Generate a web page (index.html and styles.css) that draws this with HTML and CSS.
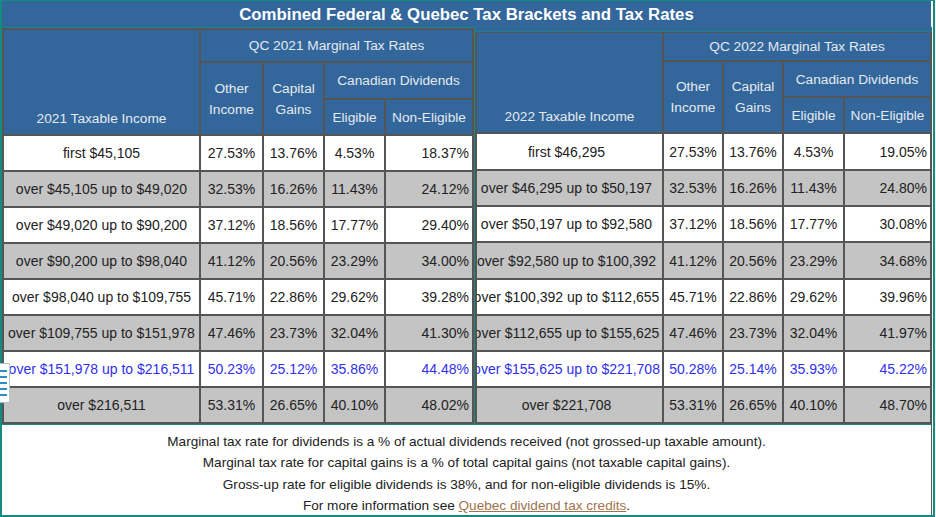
FILE: index.html
```html
<!DOCTYPE html>
<html lang="en">
<head>
<meta charset="utf-8">
<title>Combined Federal &amp; Quebec Tax Brackets and Tax Rates</title>
<link rel="stylesheet" href="styles.css">
</head>
<body>
<div class="frame">
  <div class="title">Combined Federal &amp; Quebec Tax Brackets and Tax Rates</div>
  <div class="tables">
    <div class="cell cell-left">
      <table class="rates rates-left">
        <colgroup><col class="c-inc"><col class="c-oth"><col class="c-cap"><col class="c-eli"><col class="c-non"></colgroup>
        <thead>
          <tr class="h1"><th rowspan="3" class="inc-h">2021 Taxable Income</th><th colspan="4">QC 2021 Marginal Tax Rates</th></tr>
          <tr class="h2"><th rowspan="2">Other<br>Income</th><th rowspan="2">Capital<br>Gains</th><th colspan="2">Canadian Dividends</th></tr>
          <tr class="h3"><th>Eligible</th><th>Non-Eligible</th></tr>
        </thead>
        <tbody>
          <tr><td class="inc"><div class="fit">first $45,105</div></td><td>27.53%</td><td>13.76%</td><td>4.53%</td><td class="non">18.37%</td></tr>
          <tr class="alt"><td class="inc"><div class="fit">over $45,105 up to $49,020</div></td><td>32.53%</td><td>16.26%</td><td>11.43%</td><td class="non">24.12%</td></tr>
          <tr><td class="inc"><div class="fit">over $49,020 up to $90,200</div></td><td>37.12%</td><td>18.56%</td><td>17.77%</td><td class="non">29.40%</td></tr>
          <tr class="alt"><td class="inc"><div class="fit">over $90,200 up to $98,040</div></td><td>41.12%</td><td>20.56%</td><td>23.29%</td><td class="non">34.00%</td></tr>
          <tr><td class="inc"><div class="fit">over $98,040 up to $109,755</div></td><td>45.71%</td><td>22.86%</td><td>29.62%</td><td class="non">39.28%</td></tr>
          <tr class="alt"><td class="inc"><div class="fit">over $109,755 up to $151,978</div></td><td>47.46%</td><td>23.73%</td><td>32.04%</td><td class="non">41.30%</td></tr>
          <tr class="hl"><td class="inc"><div class="fit">over $151,978 up to $216,511</div></td><td>50.23%</td><td>25.12%</td><td>35.86%</td><td class="non">44.48%</td></tr>
          <tr class="alt"><td class="inc"><div class="fit">over $216,511</div></td><td>53.31%</td><td>26.65%</td><td>40.10%</td><td class="non">48.02%</td></tr>
        </tbody>
      </table>
    </div>
    <div class="cell cell-right">
      <table class="rates rates-right">
        <colgroup><col class="c-inc"><col class="c-oth"><col class="c-cap"><col class="c-eli"><col class="c-non"></colgroup>
        <thead>
          <tr class="h1"><th rowspan="3" class="inc-h">2022 Taxable Income</th><th colspan="4">QC 2022 Marginal Tax Rates</th></tr>
          <tr class="h2"><th rowspan="2">Other<br>Income</th><th rowspan="2">Capital<br>Gains</th><th colspan="2">Canadian Dividends</th></tr>
          <tr class="h3"><th>Eligible</th><th>Non-Eligible</th></tr>
        </thead>
        <tbody>
          <tr><td class="inc"><div class="fit">first $46,295</div></td><td>27.53%</td><td>13.76%</td><td>4.53%</td><td class="non">19.05%</td></tr>
          <tr class="alt"><td class="inc"><div class="fit">over $46,295 up to $50,197</div></td><td>32.53%</td><td>16.26%</td><td>11.43%</td><td class="non">24.80%</td></tr>
          <tr><td class="inc"><div class="fit">over $50,197 up to $92,580</div></td><td>37.12%</td><td>18.56%</td><td>17.77%</td><td class="non">30.08%</td></tr>
          <tr class="alt"><td class="inc"><div class="fit">over $92,580 up to $100,392</div></td><td>41.12%</td><td>20.56%</td><td>23.29%</td><td class="non">34.68%</td></tr>
          <tr><td class="inc"><div class="fit">over $100,392 up to $112,655</div></td><td>45.71%</td><td>22.86%</td><td>29.62%</td><td class="non">39.96%</td></tr>
          <tr class="alt"><td class="inc"><div class="fit">over $112,655 up to $155,625</div></td><td>47.46%</td><td>23.73%</td><td>32.04%</td><td class="non">41.97%</td></tr>
          <tr class="hl"><td class="inc"><div class="fit">over $155,625 up to $221,708</div></td><td>50.28%</td><td>25.14%</td><td>35.93%</td><td class="non">45.22%</td></tr>
          <tr class="alt"><td class="inc"><div class="fit">over $221,708</div></td><td>53.31%</td><td>26.65%</td><td>40.10%</td><td class="non">48.70%</td></tr>
        </tbody>
      </table>
    </div>
  </div>
  <div class="notes">
    <p>Marginal tax rate for dividends is a % of actual dividends received (not grossed-up taxable amount).</p>
    <p>Marginal tax rate for capital gains is a % of total capital gains (not taxable capital gains).</p>
    <p>Gross-up rate for eligible dividends is 38%, and for non-eligible dividends is 15%.</p>
    <p>For more information see <a href="#" class="link">Quebec dividend tax credits</a>.</p>
  </div>
  <div class="handle" aria-hidden="true"><span></span><span></span><span></span><span></span><span></span></div>
</div>
</body>
</html>
```
FILE: styles.css
```css
html, body {
  margin: 0;
  padding: 0;
  background: #ffffff;
}
body {
  font-family: "Liberation Sans", Arial, sans-serif;
  color: #222222;
}
.frame {
  position: relative;
  box-sizing: border-box;
  width: 935px;
  height: 517px;
  border: 2px solid #168a80;
  border-top-width: 1px;
  background: #ffffff;
}
.title {
  margin-right: 2px;
  height: 26px;
  line-height: 28px;
  background: #33669a;
  color: #ffffff;
  font-weight: bold;
  font-size: 16.8px;
  text-align: center;
}
.tables {
  display: flex;
  width: 930px;
  border-bottom: 1px solid #168a80;
}
.cell {
  flex: none;
  box-sizing: border-box;
}
.cell-left {
  width: 473px;
  border-top: 1px solid #168a80;
  border-right: 1px solid #168a80;
}
.cell-right {
  width: 457px;
  padding-top: 4px;
  background: #33669a;
}
.rates {
  table-layout: fixed;
  border-collapse: separate;
  border-spacing: 0;
  border: 1px solid #555555;
  font-size: 14px;
  background: #ffffff;
}
.rates-left { width: 472px; }
.rates-right { width: 457px; border-top-color: #1f7f86; }
.rates th, .rates td {
  border: 1px solid #555555;
  padding: 0 4px;
  white-space: nowrap;
}
.rates th {
  background: #33669a;
  color: #e4eaf1;
  font-weight: normal;
  font-size: 13.7px;
  line-height: 21px;
  vertical-align: middle;
  text-align: center;
}
.rates th.inc-h {
  vertical-align: bottom;
  padding-bottom: 5px;
}
.rates-left .c-inc { width: 197px; }
.rates-left .c-oth { width: 63px; }
.rates-left .c-cap { width: 61px; }
.rates-left .c-eli { width: 61px; }
.rates-left .c-non { width: 88px; }
.rates-right .c-inc { width: 187px; }
.rates-right .c-oth { width: 60px; }
.rates-right .c-cap { width: 60px; }
.rates-right .c-eli { width: 61px; }
.rates-right .c-non { width: 87px; }
.rates-left .h1 { height: 33px; }
.rates-left .h2 { height: 37px; }
.rates-left .h3 { height: 36px; }
.rates-right .h1 { height: 29px; }
.rates-right .h2 { height: 36px; }
.rates-right .h3 { height: 36px; }
.rates tbody tr { height: 36px; background: #ffffff; }
.rates-right tbody tr:nth-child(1),
.rates-right tbody tr:nth-child(4) { height: 37px; }
.rates tbody tr.alt { background: #c4c4c4; }
.rates tbody tr.hl { color: #3030ee; }
.rates td {
  text-align: center;
  vertical-align: middle;
  padding: 0 2px;
}
.rates td.inc { padding: 0; }
.fit {
  display: flex;
  justify-content: center;
  overflow: hidden;
  white-space: nowrap;
}
.rates-right .fit { padding-right: 6px; }
.rates td.non { text-align: right; padding-right: 3px; }
.notes {
  margin-right: 1px;
  border-right: 1px solid #555555;
  padding-top: 6px;
  height: 84px;
  text-align: center;
  font-size: 13.6px;
  line-height: 21.3px;
  color: #222222;
}
.notes p { margin: 0; }
.link {
  color: #a0734d;
  text-decoration: underline;
}
.handle {
  position: absolute;
  left: -2px;
  top: 362px;
  width: 10px;
  height: 40px;
  background: #ffffff;
  border: 1px solid #b8c4cc;
  border-left: 0;
  display: flex;
  flex-direction: column;
  justify-content: space-evenly;
  padding: 2px 0;
  box-sizing: border-box;
}
.handle span {
  display: block;
  width: 7px;
  height: 2px;
  background: #2a8ec4;
}
```
